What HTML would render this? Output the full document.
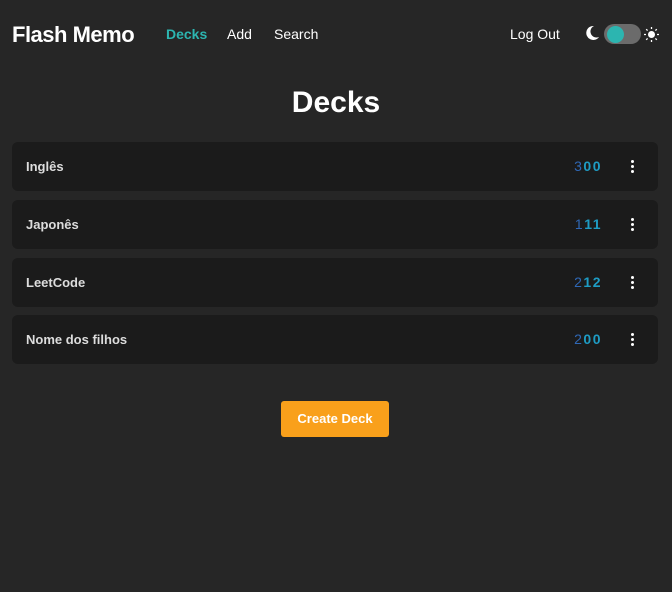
<!DOCTYPE html>
<html><head><style>
*{margin:0;padding:0;box-sizing:border-box}
body{width:672px;height:592px;background:#262626;font-family:"Liberation Sans",sans-serif;color:#fff;position:relative;overflow:hidden}
.a{position:absolute;white-space:nowrap}
.logo{left:12px;top:22px;font-size:22px;font-weight:bold;letter-spacing:-0.5px}
.nav{top:26px;font-size:14px}
h1{position:absolute;left:0;width:672px;text-align:center;top:86px;font-size:30px;font-weight:bold}
.card{position:absolute;left:12px;width:646px;height:49px;background:#1b1b1b;border-radius:6px}
.card .n{position:absolute;left:14px;top:17px;font-size:13px;font-weight:bold;color:#ddd}
.card .c{position:absolute;right:56px;top:16px;font-size:14px;font-weight:bold;letter-spacing:1.5px;color:#1e9cc4}
.card .c b{font-weight:normal;color:#2f68b6}
.dots{position:absolute;right:24px;top:18px;width:3px}
.dots i{display:block;width:3px;height:3px;background:#fff;border-radius:50%;margin-bottom:2px}
.btn{position:absolute;left:281px;top:401px;width:108px;height:36px;background:#f9a01b;border-radius:3px;font-size:13px;font-weight:bold;text-align:center;line-height:36px}
</style></head><body>
<div class="a logo">Flash Memo</div>
<div class="a nav" style="left:166px;color:#2cb5b0;font-weight:bold">Decks</div>
<div class="a nav" style="left:227px">Add</div>
<div class="a nav" style="left:274px">Search</div>
<div class="a nav" style="left:510px">Log Out</div>
<svg class="a" style="left:586px;top:25px" width="14" height="16" viewBox="0 0 14 16"><path d="M8 1A7 7 0 1 0 13 12A6 6 0 0 1 8 1Z" fill="#fff"/></svg>
<div class="a" style="left:604px;top:24px;width:37px;height:20px;background:#6b6b6b;border-radius:10px"></div>
<div class="a" style="left:607px;top:26px;width:17px;height:17px;background:#2cb5b0;border-radius:50%"></div>
<svg class="a" style="left:644px;top:27px" width="15" height="15" viewBox="0 0 15 15"><circle cx="7.5" cy="7.5" r="3.5" fill="#fff"/><g stroke="#fff" stroke-width="1.3"><path d="M7.5 0v2M7.5 13v2M0 7.5h2M13 7.5h2M2.2 2.2l1.4 1.4M11.4 11.4l1.4 1.4M2.2 12.8l1.4-1.4M11.4 3.6l1.4-1.4"/></g></svg>
<h1>Decks</h1>
<div class="card" style="top:142px"><span class="n">Inglês</span><span class="c"><b>3</b>00</span><div class="dots"><i></i><i></i><i></i></div></div>
<div class="card" style="top:200px"><span class="n">Japonês</span><span class="c"><b>1</b>11</span><div class="dots"><i></i><i></i><i></i></div></div>
<div class="card" style="top:258px"><span class="n">LeetCode</span><span class="c"><b>2</b>12</span><div class="dots"><i></i><i></i><i></i></div></div>
<div class="card" style="top:315px"><span class="n">Nome dos filhos</span><span class="c"><b>2</b>00</span><div class="dots"><i></i><i></i><i></i></div></div>
<div class="btn">Create Deck</div>
</body></html>
